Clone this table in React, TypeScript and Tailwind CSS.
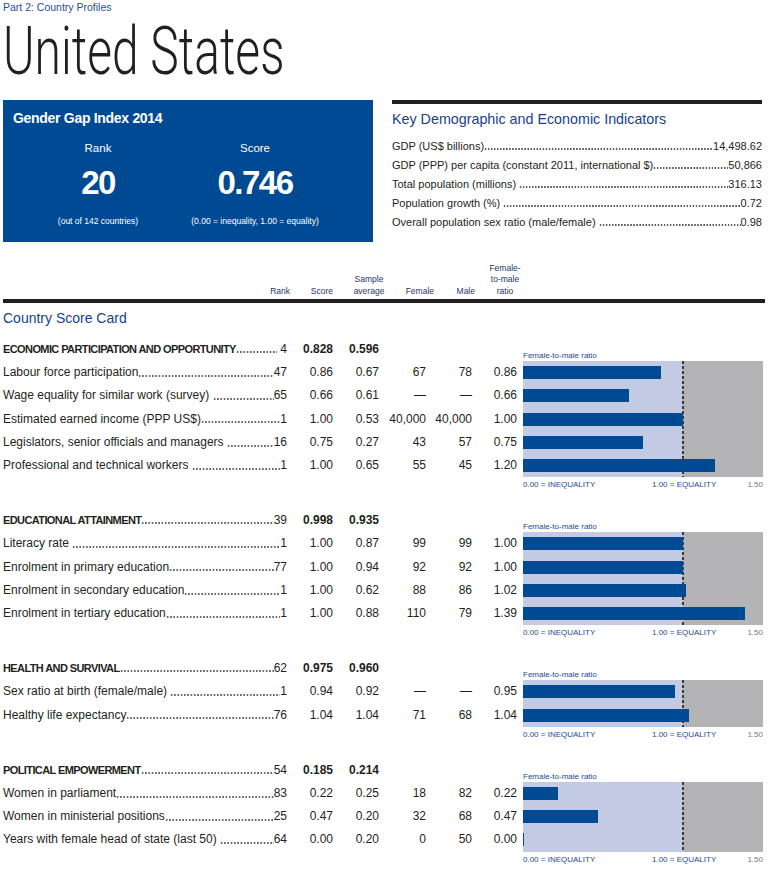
import React from 'react';

type Row = [string, string, string, string, string, string, string, number];

interface Section {
  title: string;
  rank: string;
  score: string;
  avg: string;
  rows: Row[];
}

const sections: Section[] = [
  {
    title: 'ECONOMIC PARTICIPATION AND OPPORTUNITY',
    rank: '\u00a04',
    score: '0.828',
    avg: '0.596',
    rows: [
      ['Labour force participation', '47', '0.86', '0.67', '67', '78', '0.86', 0.86],
      ['Wage equality for similar work (survey) ', '65', '0.66', '0.61', '—', '—', '0.66', 0.66],
      ['Estimated earned income (PPP US$)', '1', '1.00', '0.53', '40,000', '40,000', '1.00', 1.0],
      ['Legislators, senior officials and managers ', '16', '0.75', '0.27', '43', '57', '0.75', 0.75],
      ['Professional and technical workers ', '1', '1.00', '0.65', '55', '45', '1.20', 1.2],
    ],
  },
  {
    title: 'EDUCATIONAL ATTAINMENT',
    rank: '39',
    score: '0.998',
    avg: '0.935',
    rows: [
      ['Literacy rate ', '1', '1.00', '0.87', '99', '99', '1.00', 1.0],
      ['Enrolment in primary education', '77', '1.00', '0.94', '92', '92', '1.00', 1.0],
      ['Enrolment in secondary education', '1', '1.00', '0.62', '88', '86', '1.02', 1.02],
      ['Enrolment in tertiary education', '1', '1.00', '0.88', '110', '79', '1.39', 1.39],
    ],
  },
  {
    title: 'HEALTH AND SURVIVAL',
    rank: '62',
    score: '0.975',
    avg: '0.960',
    rows: [
      ['Sex ratio at birth (female/male) ', '1', '0.94', '0.92', '—', '—', '0.95', 0.95],
      ['Healthy life expectancy', '76', '1.04', '1.04', '71', '68', '1.04', 1.04],
    ],
  },
  {
    title: 'POLITICAL EMPOWERMENT',
    rank: '54',
    score: '0.185',
    avg: '0.214',
    rows: [
      ['Women in parliament', '83', '0.22', '0.25', '18', '82', '0.22', 0.22],
      ['Women in ministerial positions', '25', '0.47', '0.20', '32', '68', '0.47', 0.47],
      ['Years with female head of state (last 50) ', '64', '0.00', '0.20', '0', '50', '0.00', 0.0],
    ],
  },
];

const indicators = [
  ['GDP (US$ billions)', '14,498.62'],
  ['GDP (PPP) per capita (constant 2011, international $)', '50,866'],
  ['Total population (millions) ', '316.13'],
  ['Population growth (%) ', '0.72'],
  ['Overall population sex ratio (male/female) ', '0.98'],
];

// dotted leader between a label and its value
function Leader({ label, value, bold, dots }: { label: string; value: string; bold?: boolean; dots: string }) {
  return (
    <div className="flex items-baseline whitespace-nowrap">
      <span className={bold ? 'font-bold text-[11px] tracking-[-0.6px]' : ''}>{label.replace(/ $/, '\u00a0')}</span>
      <span className={`flex-1 self-end h-[2px] bg-repeat-x bg-[radial-gradient(circle,#231f20_0.55px,transparent_0.85px)] ${dots}`} />
      <span>{value}</span>
    </div>
  );
}

function Chart({ values }: { values: number[] }) {
  return (
    <div className="w-[240px]">
      <div className="relative bg-[#c3cae3]">
        <div className="absolute left-[160px] right-0 top-0 bottom-0 bg-[#b4b4b6]" />
        <div className="absolute left-[159px] top-0 bottom-0 w-[2px] bg-[repeating-linear-gradient(to_bottom,#3a3a3a_0_3px,transparent_3px_5px)]" />
        {values.map((v, i) => (
          <div key={i} className="relative h-[23.25px] flex items-center">
            <div className="h-[13px] bg-[#004a93]" style={{ width: Math.max(1, v * 160) }} />
          </div>
        ))}
      </div>
      <div className="mt-[2px] flex h-[11px] text-[8px] leading-[11px] text-[#1c4a94]">
        <span className="w-[129px]">0.00 = INEQUALITY</span>
        <span>1.00 = EQUALITY</span>
        <span className="ml-auto text-[#777]">1.50</span>
      </div>
    </div>
  );
}

function ScoreSection({ s }: { s: Section }) {
  return (
    <div className="flex mb-[18px]">
      <div className="w-[514px] text-[12px]">
        <div className="h-[24px] leading-[24px] grid grid-cols-[284px_46px_46px]">
          <Leader label={s.title} value={s.rank} bold dots="mb-[8px] bg-[length:3.3px_2px]" />
          <span className="text-right font-bold">{s.score}</span>
          <span className="text-right font-bold">{s.avg}</span>
        </div>
        {s.rows.map((r) => (
          <div key={r[0]} className="h-[23.25px] leading-[23.25px] grid grid-cols-[284px_46px_46px_47px_46px_45px]">
            <Leader label={r[0]} value={r[1]} dots="mb-[7.5px] bg-[length:3.3px_2px]" />
            <span className="text-right">{r[2]}</span>
            <span className="text-right">{r[3]}</span>
            <span className="text-right">{r[4]}</span>
            <span className="text-right">{r[5]}</span>
            <span className="text-right">{r[6]}</span>
          </div>
        ))}
      </div>
      <div className="ml-[6px]">
        <div className="h-[24px] flex items-end text-[8px] leading-[11px] text-[#1c4a94]">Female-to-male ratio</div>
        <Chart values={s.rows.map((r) => r[7])} />
      </div>
    </div>
  );
}

export default function App() {
  return (
    <div className="w-[768px] h-[880px] overflow-hidden bg-white text-[#231f20] font-['Liberation_Sans',Arial,sans-serif]">
      <div className="pl-[3px] h-[14px] text-[10.5px] leading-[14px] text-[#1f4e9a]">
        Part 2: Country Profiles
      </div>
      <div className="mt-[2px] pl-[3px] h-[72px]">
        <h1 className="origin-left scale-x-[0.727] whitespace-nowrap text-[66px] leading-[72px] font-light font-['Roboto',sans-serif] text-[#231f20]">
          United States
        </h1>
      </div>

      <div className="mt-[12px] flex pl-[3px]">
        <div className="w-[370px] h-[142px] bg-[#004a93] text-white pl-[10px]">
          <div className="pt-[9px] text-[14px] leading-[18px] font-bold tracking-[-0.3px]">Gender Gap Index 2014</div>
          <div className="grid grid-cols-[170px_144px] text-center">
            <div>
              <div className="mt-[13px] text-[11.5px] leading-[16px]">Rank</div>
              <div className="mt-[7px] text-[33px] leading-[40px] font-bold tracking-[-1.5px]">20</div>
              <div className="mt-[12px] text-[8.5px] leading-[12px]">(out of 142 countries)</div>
            </div>
            <div>
              <div className="mt-[13px] text-[11.5px] leading-[16px]">Score</div>
              <div className="mt-[7px] text-[33px] leading-[40px] font-bold tracking-[-1.5px]">0.746</div>
              <div className="mt-[12px] text-[8.5px] leading-[12px]">(0.00 = inequality, 1.00 = equality)</div>
            </div>
          </div>
        </div>

        <div className="ml-[19px] w-[370px]">
          <div className="h-[4px] bg-[#231f20]" />
          <div className="mt-[5px] text-[14.3px] leading-[20px] text-[#17428f]">Key Demographic and Economic Indicators</div>
          <div className="mt-[8px] text-[11px] leading-[19px]">
            {indicators.map(([k, v]) => (
              <Leader key={k} label={k} value={v} dots="mb-[5.9px] bg-[length:3.06px_2px]" />
            ))}
          </div>
        </div>
      </div>

      {/* column headers */}
      <div className="mt-[20px] h-[35px] pl-[3px] flex items-end text-[8.5px] leading-[11.5px] text-[#1e3566]">
        <div className="w-[287px] text-right">Rank</div>
        <div className="w-[43px] text-right">Score</div>
        <div className="w-[72px] text-center">Sample<br />average</div>
        <div className="w-[29px] text-right">Female</div>
        <div className="w-[41px] text-right">Male</div>
        <div className="w-[60px] text-center">Female-<br />to-male<br />ratio</div>
      </div>
      <div className="mt-[2px] ml-[3px] w-[762px] h-[4px] bg-[#231f20]" />

      <div className="pl-[3px]">
        <div className="mt-[5px] mb-[9px] text-[14px] leading-[20px] text-[#17428f]">Country Score Card</div>
        {sections.map((s) => (
          <ScoreSection key={s.title} s={s} />
        ))}
      </div>
    </div>
  );
}
